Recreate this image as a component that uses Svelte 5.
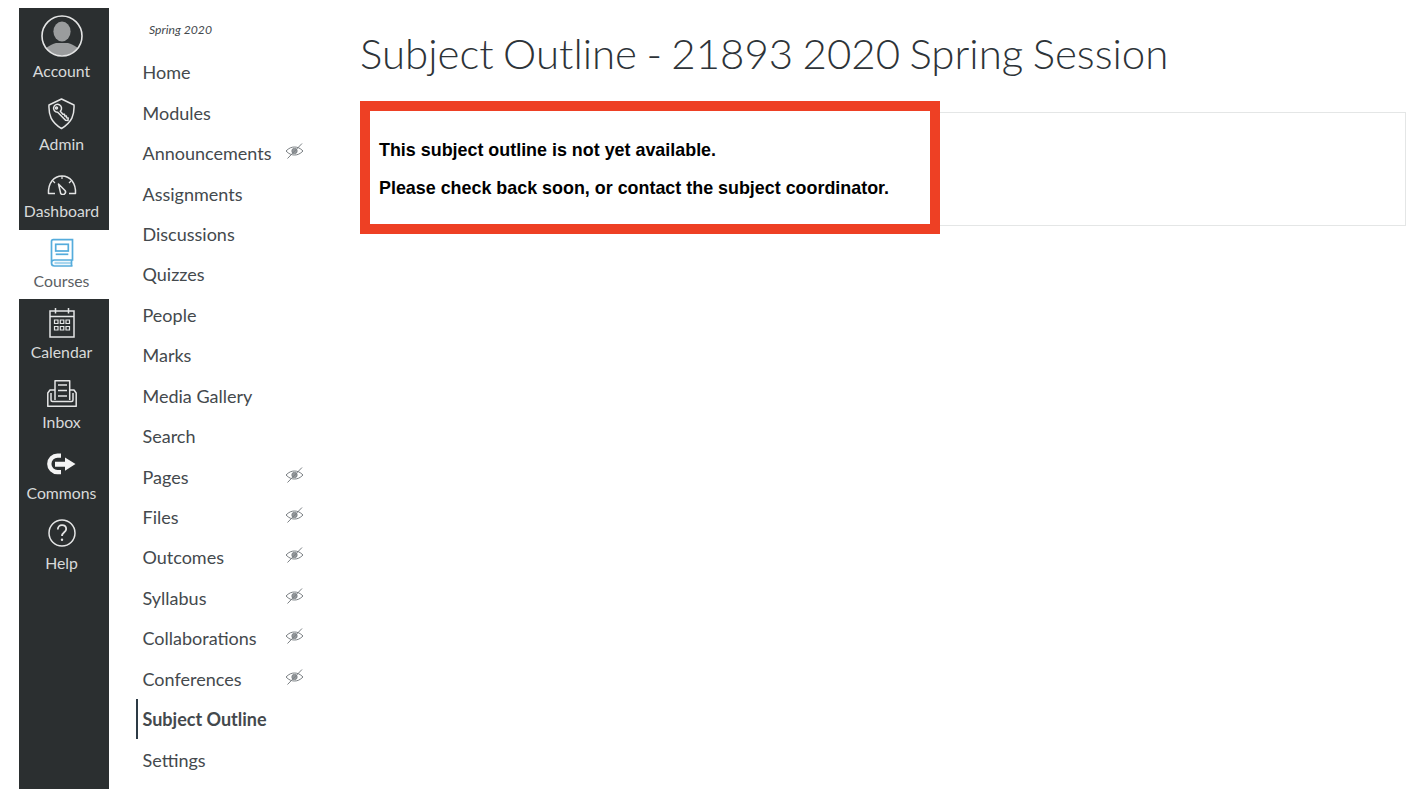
<script>
  const navItems = [
    { label: 'Home' }, { label: 'Modules' }, { label: 'Announcements', hidden: true },
    { label: 'Assignments' }, { label: 'Discussions' }, { label: 'Quizzes' },
    { label: 'People' }, { label: 'Marks' }, { label: 'Media Gallery' }, { label: 'Search' },
    { label: 'Pages', hidden: true }, { label: 'Files', hidden: true }, { label: 'Outcomes', hidden: true },
    { label: 'Syllabus', hidden: true }, { label: 'Collaborations', hidden: true }, { label: 'Conferences', hidden: true },
    { label: 'Subject Outline', active: true }, { label: 'Settings' }
  ];
</script>

<div class="page">
  <nav class="rail">
    <div class="rail-item account">
      <svg width="42" height="42" viewBox="0 0 42 42">
        <defs><clipPath id="avatar"><circle cx="21" cy="21" r="19.5" /></clipPath></defs>
        <g clip-path="url(#avatar)" fill="#9a9c9d">
          <ellipse cx="21" cy="16.500" rx="8.600" ry="10" />
          <path d="M1 41c1-8 8-11 14-13h12c6 2 13 5 14 13z" />
        </g>
        <circle cx="21" cy="21" r="20" fill="none" stroke="#e4e5e5" stroke-width="1.600" />
      </svg>
      <span>Account</span>
    </div>
    <div class="rail-item admin">
      <svg width="28" height="32" viewBox="0 0 28 32" fill="none" stroke="#e4e5e5" stroke-width="1.500" stroke-linejoin="round">
        <path d="M13.500 1 26 7c.5 10-2 17-12.500 23.500C3 24 .5 17 1 7z" />
        <path d="M12.300 13.200a4 4 0 1 0-2.600 1.100l7.800 8 2.500.2.200-2.500-1.700-.3-.1-1.600-1.700-.2-.2-1.600-1.600-.1z" />
        <circle cx="8.500" cy="10" r="1" />
      </svg>
      <span>Admin</span>
    </div>
    <div class="rail-item dashboard">
      <svg width="30" height="20" viewBox="0 0 30 20" fill="none" stroke="#e4e5e5" stroke-width="1.500" stroke-linejoin="round">
        <path d="M8 18.500H1.500C1 8 7 1 15 1s14 7 13.500 17.500H22" />
        <path d="m11.500 9 6.500 6.500a2.600 2.600 0 0 1-4.300 3z" />
        <path d="M15 1v3M6 6l2 2M24 6l-2 2" stroke-width="1.200" />
      </svg>
      <span>Dashboard</span>
    </div>
    <div class="rail-item courses">
      <svg width="24" height="30" viewBox="0 0 24 30" fill="none" stroke="#55acdc" stroke-width="1.700">
        <path d="M1.500 25V3.500c0-1 .7-1.800 1.800-1.800H22.500V22H4.500c-2 0-3 1.300-3 3s1 3 3 3h18" />
        <path d="M4.500 25h17.500" stroke-width="2.400" stroke="#a9d6ee" />
        <path d="M21.500 22v6" />
        <rect x="5.700" y="6.300" width="12.600" height="6.700" />
        <path d="M5.700 16.300h12.600" />
      </svg>
      <span>Courses</span>
    </div>
    <div class="rail-item calendar">
      <svg width="26" height="31" viewBox="0 0 26 31" fill="none" stroke="#e4e5e5" stroke-width="1.500">
        <rect x="1" y="4" width="24" height="26" />
        <path d="M1 9.500h24M6.500 1v5.500M19.500 1v5.500" />
        <path d="M5.500 13h3.500v3.500H5.500zM11.300 13h3.500v3.500h-3.500zM17 13h3.500v3.500H17zM5.500 19.500h3.500V23H5.500zM11.300 19.500h3.500V23h-3.500zM17 19.500h3.500V23H17z" stroke-width="1.200" />
      </svg>
      <span>Calendar</span>
    </div>
    <div class="rail-item inbox">
      <svg width="30" height="27" viewBox="0 0 30 27" fill="none" stroke="#e4e5e5" stroke-width="1.500" stroke-linejoin="round">
        <path d="M8 20V.8h14.700V20" />
        <path d="M11 5h9M11 10.500h9M11 16h9" />
        <path d="M8 10H3L.8 13v13.300h28.400V13L27 10h-4.300" />
        <path d="M4 13v7c0 1 .5 1.500 1.500 1.500h19c1 0 1.500-.5 1.500-1.500v-7" />
      </svg>
      <span>Inbox</span>
    </div>
    <div class="rail-item commons">
      <svg width="30" height="22" viewBox="0 0 30 22">
        <path fill="none" stroke="#f4f4f4" stroke-width="4.300" d="M14 2.700h-3.500a8.200 8.200 0 0 0 0 16.400H14" />
        <path fill="#f4f4f4" d="M8 8.700h10V4.500l10.500 6.500L18 17.700v-4H8z" />
      </svg>
      <span>Commons</span>
    </div>
    <div class="rail-item help">
      <svg width="28" height="28" viewBox="0 0 28 28" fill="none" stroke="#e4e5e5" stroke-width="1.500">
        <circle cx="14" cy="14" r="13" />
        <path d="M9.800 10.500c0-2.800 1.800-4.300 4.200-4.300s4.200 1.500 4.200 3.800c0 3.300-4.200 3.300-4.200 7" stroke-width="1.800" />
        <circle cx="14" cy="20.800" r="1.200" fill="#e4e5e5" stroke="none" />
      </svg>
      <span>Help</span>
    </div>
  </nav>

  <aside class="subnav">
    <div class="term">Spring 2020</div>
    <ul>
      {#each navItems as item}
        <li class:active={item.active}>
          <span>{item.label}</span>
          {#if item.hidden}
            <svg class="eye" width="19" height="18" viewBox="0 0 19 18" fill="none" stroke="#7a7f83" stroke-width="1">
              <path d="M1 9C4 6 6.500 5 9.500 5s5.500 1 8.500 4c-3 3-5.500 4-8.500 4S4 12 1 9z" />
              <circle cx="9.500" cy="9" r="2.700" fill="#94989b" stroke-width="0.800" />
              <path d="M2.500 16.500 17 1.500" stroke-width="1" />
            </svg>
          {/if}
        </li>
      {/each}
    </ul>
  </aside>

  <main>
    <h1>Subject Outline - 21893 2020 Spring Session</h1>
    <section class="panel">
      <div class="highlight"></div>
      <p>This subject outline is not yet available.</p>
      <p>Please check back soon, or contact the subject coordinator.</p>
    </section>
  </main>
</div>

<style>
  :global(body) {
    margin: 0;
    background: #fff;
    font-family: Lato, "Open Sans", sans-serif;
  }
  .page {
    display: flex;
    align-items: flex-start;
    padding: 8px 16px 0 19px;
    height: 790px;
    box-sizing: border-box;
    overflow: hidden;
  }
  .rail {
    flex: 0 0 90px;
    height: 781px;
    background: #2b2f30;
    display: flex;
    flex-direction: column;
  }
  .rail-item {
    display: flex;
    flex-direction: column;
    align-items: center;
    justify-content: flex-end;
    padding: 0 5px 8px 0;
    box-sizing: border-box;
    color: #d8dada;
    font-size: 15.800px;
    line-height: 20px;
    height: 70.500px;
  }
  .rail-item svg { display: block; }
  .account { height: 82px; padding-bottom: 9px; }
  .account svg { margin-bottom: 4px; }
  .admin { height: 70px; padding-bottom: 6px; }
  .admin svg { margin-bottom: 4px; }
  .dashboard { height: 70px; padding-bottom: 9px; }
  .dashboard svg { margin-bottom: 6px; }
  .courses { height: 69px; background: #fff; color: #5b6063; }
  .courses svg { margin-bottom: 3px; }
  .calendar svg { margin-bottom: 4px; }
  .inbox svg { margin-bottom: 5px; }
  .commons svg { margin-bottom: 8px; }
  .help svg { margin-bottom: 6px; }

  .subnav {
    flex: 0 0 168px;
    margin-left: 27px;
    color: #44494d;
  }
  .term {
    height: 44px;
    padding: 14px 0 0 13px;
    box-sizing: border-box;
    font-size: 12.200px;
    line-height: 16px;
    font-style: italic;
  }
  ul {
    list-style: none;
    margin: 0;
    padding: 0;
  }
  li {
    height: 40.440px;
    display: flex;
    align-items: center;
    justify-content: space-between;
    padding-left: 6.500px;
    box-sizing: border-box;
    font-size: 18px;
  }
  li.active {
    font-weight: 700;
    border-left: 2px solid #2d3b45;
    padding-left: 4.500px;
  }
  .eye { margin-top: -4px; }

  main {
    flex: 1;
    min-width: 0;
    margin-left: 56px;
  }
  h1 {
    margin: 18px 0 0;
    font-size: 42px;
    line-height: 54px;
    font-weight: 300;
    word-spacing: -2px;
    color: #2d3338;
  }
  .panel {
    position: relative;
    margin-top: 32px;
    height: 114px;
    border: 1px solid #e4e6e6;
    box-sizing: border-box;
    padding-top: 26.500px;
    font-family: "Liberation Sans", Arial, sans-serif;
    font-weight: 700;
    font-size: 17.900px;
    color: #000;
  }
  .panel p {
    position: relative;
    margin: 0 0 18px 18px;
    line-height: 20px;
  }
  .highlight {
    position: absolute;
    top: -12px;
    left: -1px;
    width: 580px;
    height: 133px;
    border: 10px solid #ee4024;
    box-sizing: border-box;
    background: #fff;
  }
</style>
